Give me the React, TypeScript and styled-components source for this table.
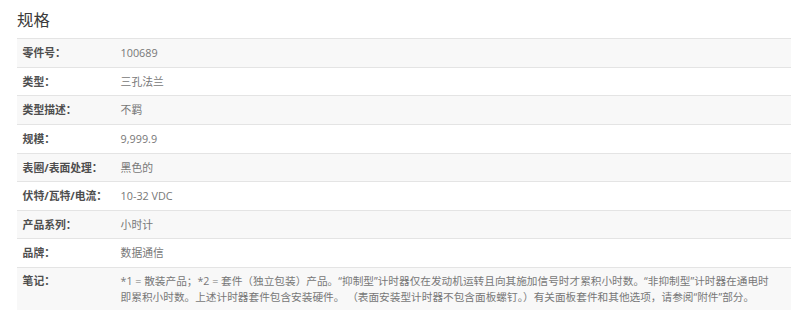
import React from "react";
import styled, { createGlobalStyle } from "styled-components";

const Global = createGlobalStyle`
  html, body { margin: 0; padding: 0; background: #ffffff; }
  body { font-family: "Open Sans", "Noto Sans CJK SC", sans-serif; }
`;

const Page = styled.div`
  padding: 11px 9px 0 17px;
  width: 800px;
  box-sizing: border-box;
`;

const Heading = styled.h2`
  margin: 0 0 9.3px;
  font-size: 16.4px;
  line-height: 18px;
  font-weight: 400;
  color: #3c3c3c;
  font-family: "Open Sans", "Noto Sans CJK SC", sans-serif;
`;

const Table = styled.div`
  display: flex;
  flex-direction: column;
`;

const Row = styled.div<{ $striped: boolean }>`
  display: grid;
  grid-template-columns: 98px 1fr;
  border-top: 1px solid #e4e4e4;
  background: ${(p) => (p.$striped ? "#f8f8f8" : "#ffffff")};
`;

const Label = styled.div`
  padding: 5px 5.6px;
  font-size: 10.8px;
  line-height: 17.6px;
  font-weight: 700;
  color: #4e4e4e;
  white-space: nowrap;
`;

const Value = styled.div<{ $multi?: boolean }>`
  padding: 5px 5.6px;
  font-size: ${(p) => (p.$multi ? "10.66px" : "10.8px")};
  line-height: ${(p) => (p.$multi ? "16.2px" : "17.6px")};
  color: #777777;
`;

const NoteLabel = styled(Label)`
  line-height: 16.2px;
`;

const Line = styled.span`
  display: block;
  white-space: nowrap;
`;

const specs: [string, string][] = [
  ["零件号：", "100689"],
  ["类型：", "三孔法兰"],
  ["类型描述：", "不羁"],
  ["规模：", "9,999.9"],
  ["表圈/表面处理：", "黑色的"],
  ["伏特/瓦特/电流：", "10-32 VDC"],
  ["产品系列：", "小时计"],
  ["品牌：", "数据通信"],
];

export default function App() {
  return (
    <>
      <Global />
      <Page>
        <Heading>规格</Heading>
        <Table>
          {specs.map(([k, v], i) => (
            <Row key={k} $striped={i % 2 === 0}>
              <Label>{k}</Label>
              <Value>{v}</Value>
            </Row>
          ))}
          <Row $striped={true}>
            <NoteLabel>笔记：</NoteLabel>
            <Value $multi>
              <Line>
                *1 = 散装产品；*2 = 套件（独立包装）产品。“抑制型”计时器仅在发动机运转且向其施加信号时才累积小时数。“非抑制型”计时器在通电时
              </Line>
              <Line>
                即累积小时数。上述计时器套件包含安装硬件。 （表面安装型计时器不包含面板螺钉。）有关面板套件和其他选项，请参阅“附件”部分。
              </Line>
            </Value>
          </Row>
        </Table>
      </Page>
    </>
  );
}
